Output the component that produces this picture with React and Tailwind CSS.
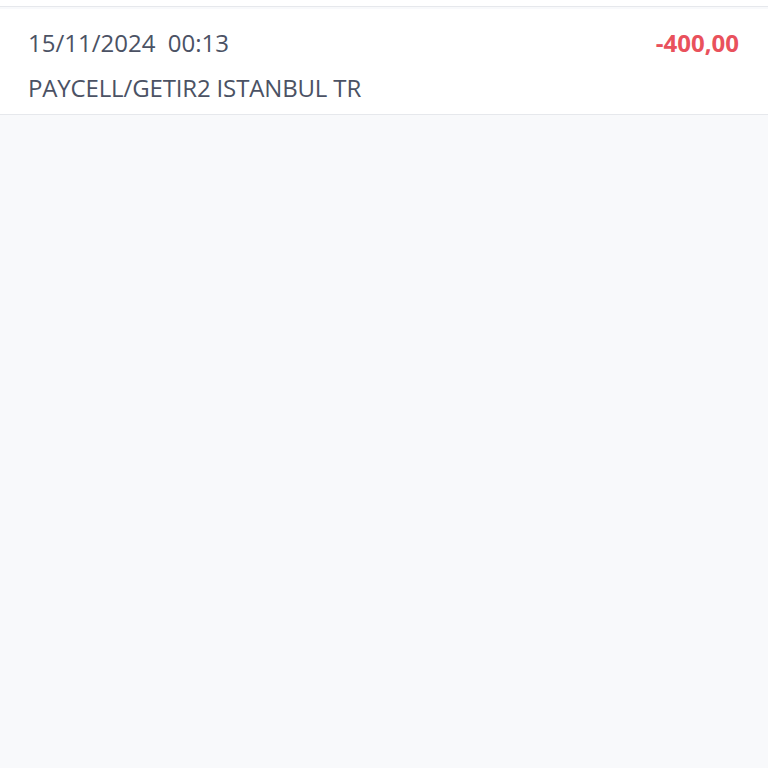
export default function App() {
  return (
    <div className="min-h-screen bg-[#f8f9fb] font-['Open_Sans',sans-serif]">
      <div className="h-[7px] bg-white border-b border-[#e6e8ec]" />
      <div className="h-[2px] bg-[#f8f9fb]" />
      <div className="flex items-start justify-between bg-white border-b border-[#e6e8ec] pl-[28px] pr-[29px] pt-[18px] pb-[10px]">
        <div className="flex flex-col">
          <div className="text-[24px] leading-[32px] text-[#4b5264]">
            15/11/2024&nbsp;&nbsp;00:13
          </div>
          <div className="text-[24px] leading-[32px] mt-[13px] tracking-[-0.15px] text-[#4b5264]">
            PAYCELL/GETIR2 ISTANBUL TR
          </div>
        </div>
        <div className="text-[24px] leading-[32px] font-bold text-[#e9515c]">-400,00</div>
      </div>
    </div>
  );
}
